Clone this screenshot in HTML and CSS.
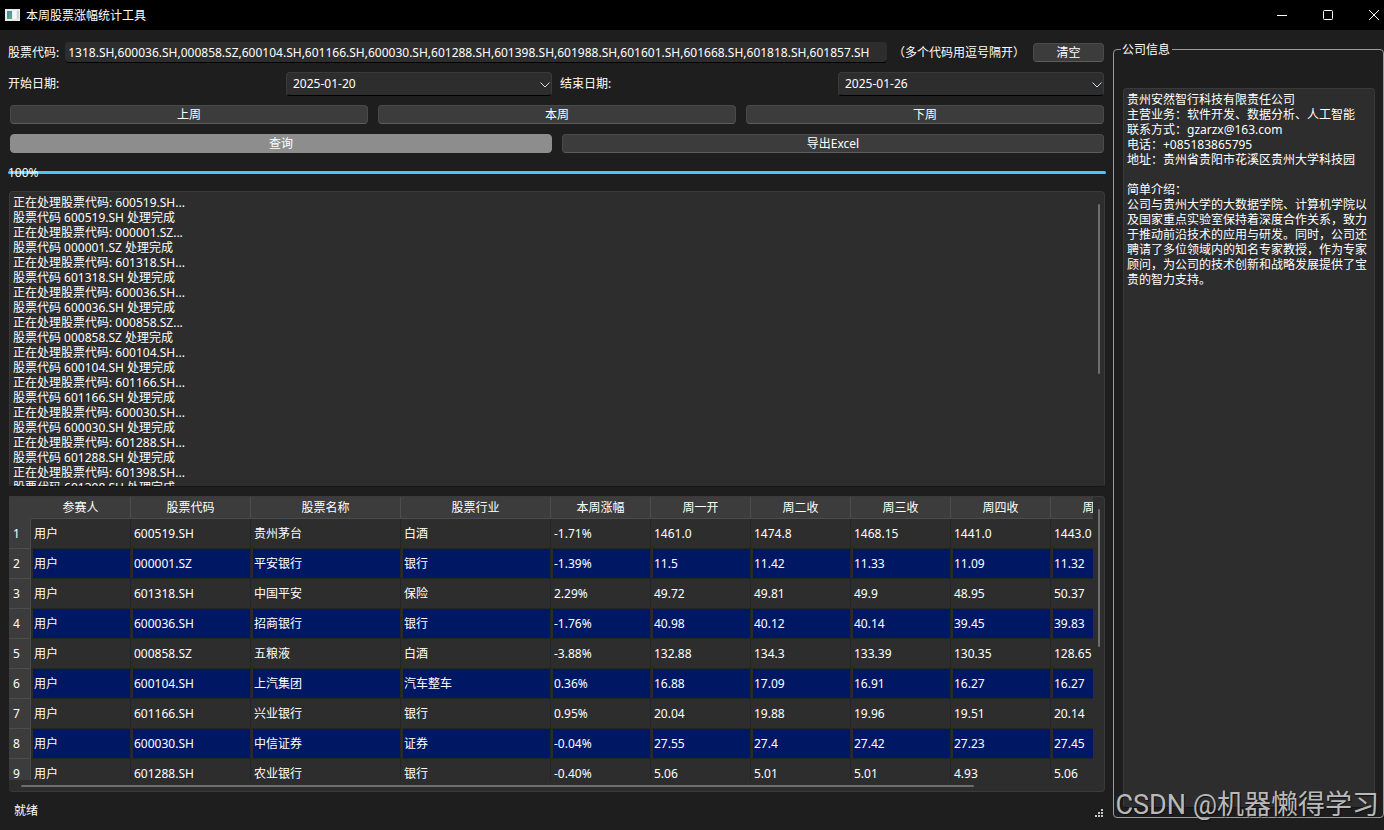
FILE: index.html
```html
<!DOCTYPE html>
<html lang="zh-CN">
<head>
<meta charset="UTF-8" />
<meta name="viewport" content="width=device-width, initial-scale=1" />
<title>本周股票涨幅统计工具</title>
<link rel="stylesheet" href="styles.css">
</head>
<body>

<header class="titlebar">
  <svg class="app-icon" width="15" height="12" viewBox="0 0 15 12">
    <defs>
      <linearGradient id="pane" x1="0" y1="0" x2="1" y2="1">
        <stop offset="0" stop-color="#4a7fb0" />
        <stop offset="1" stop-color="#5fb07a" />
      </linearGradient>
    </defs>
    <rect width="15" height="12" fill="#e9ebec" />
    <rect x="2" y="2" width="5" height="8" fill="url(#pane)" />
    <rect x="8" y="2" width="3" height="8" fill="#f6f6f6" />
    <rect x="12" y="2" width="2" height="8" fill="#c9d6d2" />
  </svg>
  <h1>本周股票涨幅统计工具</h1>
  <div class="window-buttons">
    <button type="button" aria-label="最小化"><svg width="12" height="12" viewBox="0 0 12 12"><path d="M1 6.5h10" /></svg></button>
    <button type="button" aria-label="最大化"><svg width="12" height="12" viewBox="0 0 12 12"><rect x="1.5" y="1.5" width="9" height="9" rx="1" /></svg></button>
    <button type="button" aria-label="关闭"><svg width="12" height="12" viewBox="0 0 12 12"><path d="M1 1l10 10M11 1L1 11" /></svg></button>
  </div>
</header>

<div class="window">
  <main class="left">
    <form class="query-form">
      <div class="row code-row">
        <label for="codes">股票代码:</label>
        <input type="text" id="codes" name="codes" value="1318.SH,600036.SH,000858.SZ,600104.SH,601166.SH,600030.SH,601288.SH,601398.SH,601988.SH,601601.SH,601668.SH,601818.SH,601857.SH" />
        <span class="hint">（多个代码用逗号隔开）</span>
        <button type="button" class="btn clear">清空</button>
      </div>

      <div class="row date-row">
        <label for="startDate">开始日期:</label>
        <div class="select">
          <select id="startDate" name="startDate"><option>2025-01-20</option></select>
          <svg width="10" height="6" viewBox="0 0 10 6"><path d="M0.5 0.5L5 5L9.5 0.5" /></svg>
        </div>
        <label for="endDate">结束日期:</label>
        <div class="select">
          <select id="endDate" name="endDate"><option>2025-01-26</option></select>
          <svg width="10" height="6" viewBox="0 0 10 6"><path d="M0.5 0.5L5 5L9.5 0.5" /></svg>
        </div>
      </div>

      <div class="row btn-row">
        <button type="button" class="btn">上周</button>
        <button type="button" class="btn">本周</button>
        <button type="button" class="btn">下周</button>
      </div>

      <div class="row btn-row">
        <button type="button" class="btn active">查询</button>
        <button type="button" class="btn">导出Excel</button>
      </div>

      <div class="progress-row">
        <progress id="progress" value="100" max="100"></progress>
        <label for="progress">100%</label>
      </div>
    </form>

    <div class="panel log-panel">
      <textarea class="log" aria-label="处理日志" readonly>
正在处理股票代码: 600519.SH...
股票代码 600519.SH 处理完成
正在处理股票代码: 000001.SZ...
股票代码 000001.SZ 处理完成
正在处理股票代码: 601318.SH...
股票代码 601318.SH 处理完成
正在处理股票代码: 600036.SH...
股票代码 600036.SH 处理完成
正在处理股票代码: 000858.SZ...
股票代码 000858.SZ 处理完成
正在处理股票代码: 600104.SH...
股票代码 600104.SH 处理完成
正在处理股票代码: 601166.SH...
股票代码 601166.SH 处理完成
正在处理股票代码: 600030.SH...
股票代码 600030.SH 处理完成
正在处理股票代码: 601288.SH...
股票代码 601288.SH 处理完成
正在处理股票代码: 601398.SH...
股票代码 601398.SH 处理完成</textarea>
      <div class="scroll-thumb log-thumb"></div>
    </div>

    <div class="panel table-panel">
      <div class="table-view">
        <table>
          <colgroup>
            <col class="c-num"><col class="c-user"><col class="c-code"><col class="c-name"><col class="c-name">
            <col class="c-price"><col class="c-price"><col class="c-price"><col class="c-price"><col class="c-price"><col class="c-price">
          </colgroup>
          <thead>
            <tr><th></th><th>参赛人</th><th>股票代码</th><th>股票名称</th><th>股票行业</th><th>本周涨幅</th><th>周一开</th><th>周二收</th><th>周三收</th><th>周四收</th><th>周五收</th></tr>
          </thead>
          <tbody>
            <tr><th>1</th><td>用户</td><td>600519.SH</td><td>贵州茅台</td><td>白酒</td><td>-1.71%</td><td>1461.0</td><td>1474.8</td><td>1468.15</td><td>1441.0</td><td>1443.0</td></tr>
            <tr><th>2</th><td>用户</td><td>000001.SZ</td><td>平安银行</td><td>银行</td><td>-1.39%</td><td>11.5</td><td>11.42</td><td>11.33</td><td>11.09</td><td>11.32</td></tr>
            <tr><th>3</th><td>用户</td><td>601318.SH</td><td>中国平安</td><td>保险</td><td>2.29%</td><td>49.72</td><td>49.81</td><td>49.9</td><td>48.95</td><td>50.37</td></tr>
            <tr><th>4</th><td>用户</td><td>600036.SH</td><td>招商银行</td><td>银行</td><td>-1.76%</td><td>40.98</td><td>40.12</td><td>40.14</td><td>39.45</td><td>39.83</td></tr>
            <tr><th>5</th><td>用户</td><td>000858.SZ</td><td>五粮液</td><td>白酒</td><td>-3.88%</td><td>132.88</td><td>134.3</td><td>133.39</td><td>130.35</td><td>128.65</td></tr>
            <tr><th>6</th><td>用户</td><td>600104.SH</td><td>上汽集团</td><td>汽车整车</td><td>0.36%</td><td>16.88</td><td>17.09</td><td>16.91</td><td>16.27</td><td>16.27</td></tr>
            <tr><th>7</th><td>用户</td><td>601166.SH</td><td>兴业银行</td><td>银行</td><td>0.95%</td><td>20.04</td><td>19.88</td><td>19.96</td><td>19.51</td><td>20.14</td></tr>
            <tr><th>8</th><td>用户</td><td>600030.SH</td><td>中信证券</td><td>证券</td><td>-0.04%</td><td>27.55</td><td>27.4</td><td>27.42</td><td>27.23</td><td>27.45</td></tr>
            <tr><th>9</th><td>用户</td><td>601288.SH</td><td>农业银行</td><td>银行</td><td>-0.40%</td><td>5.06</td><td>5.01</td><td>5.01</td><td>4.93</td><td>5.06</td></tr>
          </tbody>
        </table>
      </div>
      <div class="scroll-thumb table-thumb"></div>
      <div class="scroll-thumb table-thumb-x"></div>
    </div>

    <footer class="statusbar">
      <span>就绪</span>
      <svg class="grip" width="9" height="9" viewBox="0 0 9 9">
        <path d="M7 0h2v2H7zM4 3h2v2H4zM7 3h2v2H7zM1 6h2v2H1zM4 6h2v2H4zM7 6h2v2H7z" />
      </svg>
    </footer>
  </main>

  <fieldset class="company">
    <legend>公司信息</legend>
    <textarea aria-label="公司信息" readonly>
贵州安然智行科技有限责任公司
主营业务：软件开发、数据分析、人工智能
联系方式：gzarzx@163.com
电话：+085183865795
地址：贵州省贵阳市花溪区贵州大学科技园

简单介绍：
公司与贵州大学的大数据学院、计算机学院以及国家重点实验室保持着深度合作关系，致力于推动前沿技术的应用与研发。同时，公司还聘请了多位领域内的知名专家教授，作为专家顾问，为公司的技术创新和战略发展提供了宝贵的智力支持。</textarea>
  </fieldset>
</div>

<div class="watermark">CSDN @机器懒得学习</div>

</body>
</html>
```
FILE: styles.css
```css
* {
  box-sizing: border-box;
}
body {
  margin: 0;
  height: 100vh;
  display: flex;
  flex-direction: column;
  overflow: hidden;
  background: #1e1e1e;
  color: #fff;
  font-family: "Noto Sans", "Noto Sans CJK SC", sans-serif;
  font-size: 12px;
  line-height: 15px;
}
button, input, select, textarea {
  font: inherit;
  color: inherit;
}

/* title bar */
.titlebar {
  display: flex;
  align-items: center;
  height: 30px;
  padding-left: 5px;
  background: #000;
}
.titlebar h1 {
  margin: 0 0 0 6px;
  font-size: 12px;
  font-weight: normal;
}
.window-buttons {
  display: flex;
  gap: 22px;
  margin-left: auto;
  padding-right: 4px;
}
.window-buttons button {
  width: 24px;
  height: 28px;
  padding: 0;
  border: none;
  background: none;
}
.window-buttons button:last-child {
  width: 12px;
  margin-left: 6px;
}
.window-buttons svg {
  display: block;
  margin: auto;
  fill: none;
  stroke: #fff;
}

/* main layout */
.window {
  flex: 1;
  min-height: 0;
  display: grid;
  grid-template-columns: 1fr 271px;
  gap: 7px;
  padding: 12px 0;
}
.left {
  min-width: 0;
  min-height: 0;
  display: flex;
  flex-direction: column;
  padding-left: 8px;
}
.row {
  padding-right: 2px;
}
.code-row {
  display: flex;
  align-items: center;
  height: 21px;
}
.code-row input {
  flex: 1;
  min-width: 0;
  height: 21px;
  margin-left: 6px;
  padding: 0 3px;
  border: none;
  border-bottom: 1px solid #000;
  border-radius: 4px;
  background: #2d2d2d;
}
.hint {
  margin: 0 8px 0 6px;
}
.btn {
  height: 19px;
  padding: 0;
  border: 1px solid #4a4a4a;
  border-bottom-color: #5c5c5c;
  border-radius: 4px;
  background: #3c3c3c;
  line-height: 17px;
}
.btn.active {
  border-color: #8d8d8d;
  background: #8d8d8d;
}
.clear {
  width: 71px;
}
.date-row {
  display: grid;
  grid-template-columns: repeat(4, 1fr);
  align-items: center;
  column-gap: 8px;
  margin-top: 9px;
}
.date-row label {
  padding-bottom: 2px;
}
.select {
  position: relative;
  margin-left: 2px;
}
.select select {
  display: block;
  width: 100%;
  height: 24px;
  padding: 0 6px 2px;
  border: 1px solid #3a3a3a;
  border-bottom-color: #000;
  border-radius: 4px;
  appearance: none;
  background: #2d2d2d;
}
.select svg {
  position: absolute;
  right: 2px;
  top: 10px;
  fill: none;
  stroke: #c4e2fa;
  pointer-events: none;
}
.btn-row {
  display: flex;
  gap: 10px;
  margin-top: 10px;
  padding-left: 2px;
}
.date-row + .btn-row {
  margin-top: 9px;
}
.btn-row .btn {
  flex: 1;
}

/* the percentage is drawn over the bar */
.progress-row {
  position: relative;
  height: 15px;
  margin-top: 12px;
}
.progress-row progress {
  display: block;
  position: absolute;
  top: 6px;
  width: 100%;
  height: 3px;
  border: none;
  border-radius: 2px;
  appearance: none;
}
progress::-webkit-progress-bar {
  background: #1e1e1e;
}
progress::-webkit-progress-value {
  border-radius: 2px;
  background: #4cc2ff;
}
.progress-row label {
  position: absolute;
  left: 0;
  top: 0;
}

/* log and table */
.panel {
  position: relative;
  flex: 1;
  min-height: 0;
  margin: 9px 1px 0;
  border: 1px solid #3a3a3a;
  border-radius: 4px;
  background: #2d2d2d;
  overflow: hidden;
}
.log-panel {
  margin-top: 11px;
  border-bottom-color: #151515;
}
.log {
  display: block;
  width: 100%;
  height: 100%;
  padding: 3px;
  border: none;
  background: none;
  resize: none;
  overflow: hidden;
}
.scroll-thumb {
  position: absolute;
  width: 2px;
  border-radius: 1px;
  background: #6e6e6e;
}
.log-thumb {
  top: 4%;
  right: 4px;
  height: 58%;
}
.table-thumb {
  top: 4%;
  right: 4px;
  height: 47%;
}
.table-thumb-x {
  left: 12px;
  right: 130px;
  bottom: 4px;
  width: auto;
  height: 2px;
}
.table-panel {
  border-left: none;
  border-top-left-radius: 0;
}
.table-view {
  height: calc(100% - 11px);
  margin-right: 11px;
  overflow: hidden;
}
table {
  width: 1122px;
  table-layout: fixed;
  border-collapse: separate;
  border-spacing: 0;
}
.c-num { width: 22px; }
.c-user { width: 100px; }
.c-code { width: 120px; }
.c-name { width: 150px; }
.c-price { width: 100px; }
th {
  padding: 0;
  font-weight: normal;
  text-align: center;
  background: #3c3c3c;
  border-right: 1px solid #4c4c4c;
  border-bottom: 1px solid #4c4c4c;
}
thead th {
  height: 22px;
}
thead th:first-child {
  border-color: #3c3c3c;
}
tbody th {
  height: 30px;
  padding-right: 6px;
}
td {
  padding: 0 0 0 3px;
  border-right: 1px solid #252525;
  border-bottom: 1px solid #252525;
}
tbody tr:nth-child(even) td {
  background: #001864;
  box-shadow: inset 2px 0 #2a2a2a;
}

/* status bar */
.statusbar {
  display: flex;
  justify-content: space-between;
  align-items: flex-start;
  height: 26px;
  padding: 11px 3px 0 6px;
}
.grip {
  margin-top: 6px;
  fill: #c8c8c8;
}

/* company info */
.company {
  display: flex;
  min-width: 0;
  min-height: 0;
  margin: 0;
  padding: 31px 8px 9px 9px;
  border: 1px solid #9a9a9a;
  border-radius: 4px;
}
.company legend {
  margin-left: -2px;
  padding: 0 2px 0 1px;
}
.company textarea {
  flex: 1;
  min-width: 0;
  padding: 3px;
  border: 1px solid #3a3a3a;
  border-bottom-color: #151515;
  border-radius: 4px;
  background: #2d2d2d;
  resize: none;
  overflow: hidden;
}

.watermark {
  position: absolute;
  right: 5px;
  bottom: 7px;
  color: #b9b9b9;
  font-family: Roboto, "Noto Sans CJK SC", sans-serif;
  font-size: 27px;
  line-height: 36px;
  white-space: nowrap;
  text-shadow: 1px 1px 1px #111;
}
```
